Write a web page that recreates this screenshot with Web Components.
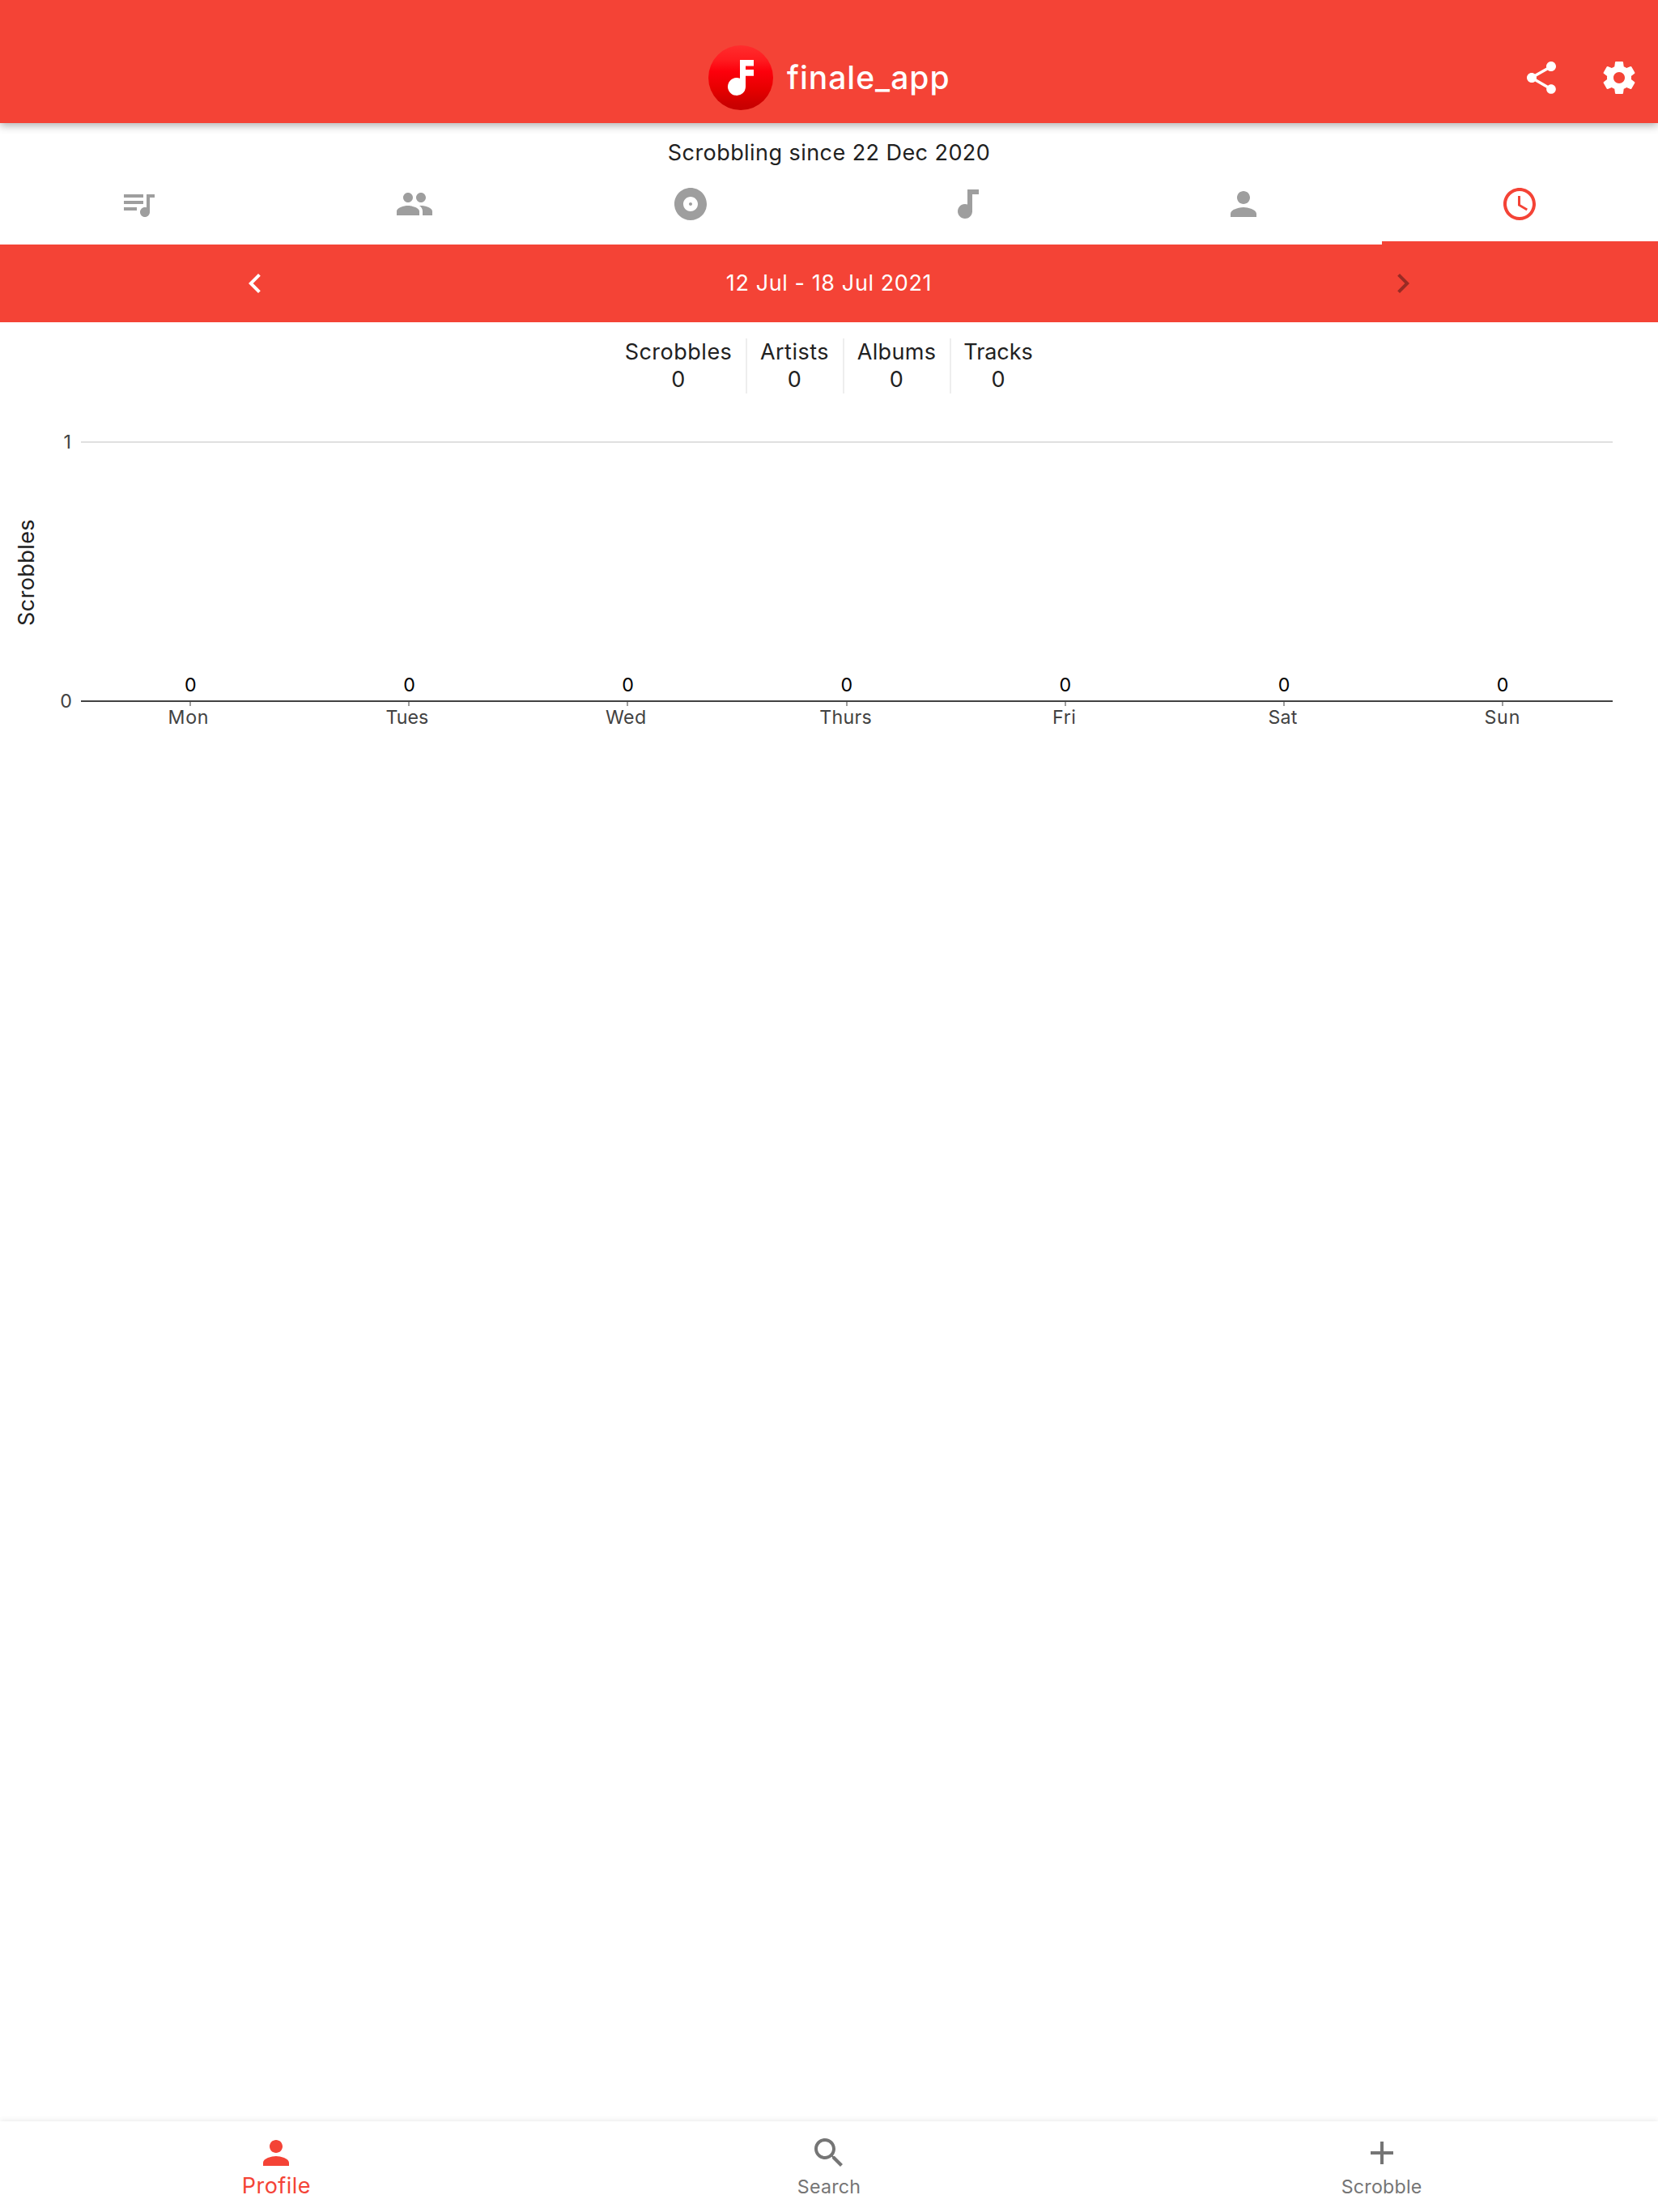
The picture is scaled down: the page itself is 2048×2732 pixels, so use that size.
<!DOCTYPE html>
<html lang="en">
<head>
<meta charset="utf-8">
<title>Finale</title>
<style>
html,body{margin:0;height:100%;background:#fff}
body{font-family:Inter,"Noto Sans",sans-serif;font-weight:400}
</style>
</head>
<body>
<finale-app></finale-app>
<script>
const ICONS = {
  share: 'M18 16.08c-.76 0-1.44.3-1.96.77L8.91 12.7c.05-.23.09-.46.09-.7s-.04-.47-.09-.7l7.05-4.11c.54.5 1.25.81 2.04.81 1.66 0 3-1.34 3-3s-1.34-3-3-3-3 1.34-3 3c0 .24.04.47.09.7L8.04 9.81C7.5 9.31 6.79 9 6 9c-1.66 0-3 1.34-3 3s1.34 3 3 3c.79 0 1.5-.31 2.04-.81l7.12 4.16c-.05.21-.08.43-.08.65 0 1.61 1.31 2.92 2.92 2.92s2.92-1.31 2.92-2.92-1.31-2.92-2.92-2.92z',
  settings: 'M19.43 12.98c.04-.32.07-.64.07-.98s-.03-.66-.07-.98l2.11-1.65c.19-.15.24-.42.12-.64l-2-3.46c-.12-.22-.39-.3-.61-.22l-2.49 1c-.52-.4-1.08-.73-1.69-.98l-.38-2.65C14.46 2.18 14.25 2 14 2h-4c-.25 0-.46.18-.49.42l-.38 2.65c-.61.25-1.17.59-1.69.98l-2.49-1c-.23-.09-.49 0-.61.22l-2 3.46c-.13.22-.07.49.12.64l2.11 1.65c-.04.32-.07.65-.07.98s.03.66.07.98l-2.11 1.65c-.19.15-.24.42-.12.64l2 3.46c.12.22.39.3.61.22l2.49-1c.52.4 1.08.73 1.69.98l.38 2.65c.03.24.24.42.49.42h4c.25 0 .46-.18.49-.42l.38-2.65c.61-.25 1.17-.59 1.69-.98l2.49 1c.23.09.49 0 .61-.22l2-3.46c.12-.22.07-.49-.12-.64l-2.11-1.65zM12 15.5c-1.93 0-3.5-1.57-3.5-3.5s1.57-3.5 3.5-3.5 3.5 1.57 3.5 3.5-1.57 3.5-3.5 3.5z',
  queue: 'M15 6H3v2h12V6zm0 4H3v2h12v-2zM3 16h8v-2H3v2zM17 6v8.18c-.31-.11-.65-.18-1-.18-1.66 0-3 1.34-3 3s1.34 3 3 3 3-1.34 3-3V8h3V6h-5z',
  people: 'M16 11c1.66 0 2.99-1.34 2.99-3S17.66 5 16 5c-1.66 0-3 1.34-3 3s1.34 3 3 3zm-8 0c1.66 0 2.99-1.34 2.99-3S9.66 5 8 5C6.34 5 5 6.34 5 8s1.34 3 3 3zm0 2c-2.33 0-7 1.17-7 3.5V19h14v-2.5c0-2.33-4.67-3.5-7-3.5zm8 0c-.29 0-.62.02-.97.05 1.16.84 1.97 1.97 1.97 3.45V19h6v-2.5c0-2.33-4.67-3.5-7-3.5z',
  album: 'M12 2C6.48 2 2 6.48 2 12s4.48 10 10 10 10-4.48 10-10S17.52 2 12 2zm0 14.5c-2.49 0-4.5-2.01-4.5-4.5S9.51 7.5 12 7.5s4.5 2.01 4.5 4.5-2.01 4.5-4.5 4.5zm0-5.5c-.55 0-1 .45-1 1s.45 1 1 1 1-.45 1-1-.45-1-1-1z',
  track: 'M12 3v9.28c-.47-.17-.97-.28-1.5-.28C8.01 12 6 14.01 6 16.5S8.01 21 10.5 21c2.31 0 4.2-1.75 4.45-4H15V6h4V3h-7z',
  person: 'M12 12c2.21 0 4-1.79 4-4s-1.79-4-4-4-4 1.79-4 4 1.79 4 4 4zm0 2c-2.67 0-8 1.34-8 4v2h16v-2c0-2.66-5.33-4-8-4z',
  clock: 'M11.99 2C6.47 2 2 6.48 2 12s4.47 10 9.99 10C17.52 22 22 17.52 22 12S17.52 2 11.99 2zM12 20c-4.42 0-8-3.58-8-8s3.58-8 8-8 8 3.58 8 8-3.58 8-8 8zM12.5 7H11v6l5.25 3.15.75-1.23-4.5-2.67z',
  prev: 'M15.41 7.41L14 6l-6 6 6 6 1.41-1.41L10.83 12z',
  next: 'M10 6L8.59 7.41 13.17 12l-4.58 4.59L10 18l6-6z',
  search: 'M15.5 14h-.79l-.28-.27C15.41 12.59 16 11.11 16 9.5 16 5.91 13.09 3 9.5 3S3 5.91 3 9.5 5.91 16 9.5 16c1.61 0 3.09-.59 4.23-1.57l.27.28v.79l5 4.99L20.49 19l-4.99-5zm-6 0C7.01 14 5 11.99 5 9.5S7.01 5 9.5 5 14 7.01 14 9.5 11.99 14 9.5 14z',
  add: 'M19 13h-6v6h-2v-6H5v-2h6V5h2v6h6v2z'
};
const define = (name, render) => customElements.define(name, class extends HTMLElement {
  connectedCallback() {
    this.attachShadow({ mode: 'open' }).innerHTML = render(this);
  }
});

define('md-icon', el => `
<style>:host{display:block;width:48px;height:48px;flex:none}svg{display:block;width:100%;height:100%;fill:currentColor}</style>
<svg viewBox="0 0 24 24"><path d="${ICONS[el.getAttribute('name')]}"/></svg>`);

define('user-avatar', () => `
<style>:host{display:block;width:80px;height:80px;flex:none}svg{display:block}</style>
<svg width="80" height="80" viewBox="0 0 80 80">
<defs><linearGradient id="g" x1="0" y1="0" x2="0" y2="1"><stop offset="0" stop-color="#ff2d2d"/><stop offset=".22" stop-color="#ff1c20"/><stop offset=".4" stop-color="#fd000c"/><stop offset=".68" stop-color="#e60000"/><stop offset=".9" stop-color="#cc0000"/><stop offset="1" stop-color="#c60000"/></linearGradient></defs>
<circle cx="40" cy="40" r="40" fill="url(#g)"/>
<path fill="#fff" d="M39 18h17v7.5H46V30h10v7.7H46V51a11 11 0 1 1-7-10.3z"/>
</svg>`);

define('app-header', () => `
<style>
:host{display:flex;box-sizing:border-box;height:152px;padding:40px 24px 0;background:#f44336;color:#fff;box-shadow:0 3px 10px rgba(0,0,0,.32);position:relative;z-index:1;align-items:center}
.side{flex:1;display:flex;justify-content:flex-end;gap:48px}
.title{display:flex;align-items:center;gap:17px;width:298px}
.name{font-size:39px;font-weight:500;line-height:48px;letter-spacing:1px}
</style>
<div class="side"></div>
<div class="title"><user-avatar></user-avatar><span class="name"><slot></slot></span></div>
<div class="side"><md-icon name="share"></md-icon><md-icon name="settings"></md-icon></div>`);

define('tab-item', el => `
<style>
:host{flex:1;display:flex;justify-content:center;height:92px;align-items:center;border-bottom:4px solid transparent;color:#9e9e9e}
:host([selected]){color:#f44336;border-color:#f44336}
</style><md-icon name="${el.getAttribute('icon')}"></md-icon>`);

define('profile-tabs', () => `<style>:host{display:flex}</style><slot></slot>`);

define('week-picker', () => `
<style>
:host{display:flex;justify-content:space-around;align-items:center;height:96px;background:#f44336;color:#fff}
.btn{width:96px;display:flex;justify-content:center}
.off{color:#982b24}
.range{font-size:27px;line-height:36px;letter-spacing:.6px}
</style>
<div class="btn"><md-icon name="prev"></md-icon></div>
<span class="range"><slot></slot></span>
<div class="btn off"><md-icon name="next"></md-icon></div>`);

define('stat-item', el => `
<style>
:host{display:flex;flex-direction:column;align-items:center;box-sizing:border-box;width:var(--w);height:68px;font-size:27px;line-height:34px;letter-spacing:var(--ls,.5px);border-left:2px solid #eee}
:host(:first-child){border-color:transparent}
</style><span>${el.getAttribute('label')}</span><span><slot></slot></span>`);

define('stat-row', () => `<style>:host{display:flex;justify-content:center;padding:20px 3px 0 0}</style><slot></slot>`);

define('week-chart', el => {
  const days = [['Mon', 232.9, .8], ['Tues', 502.8, 0], ['Wed', 773.2, .4], ['Thurs', 1044.6, .3], ['Fri', 1314.8, .6], ['Sat', 1584.5, .2], ['Sun', 1855.8, .8]];
  const step = 1892 / 7;
  return `
<style>
:host{display:block}svg{display:block;font-family:inherit;font-size:23.2px}
</style>
<svg width="2048" height="430" viewBox="0 486 2048 430">
<rect x="100" y="545" width="1892" height="2" fill="#e0e0e0"/>
${days.map((d, i) => { const x = 100 + step * (i + .5) - i * .15; return `
<rect x="${Math.round(x - 1)}" y="867" width="2" height="5" fill="#9e9e9e"/>
<text x="${x + .2}" y="854" text-anchor="middle" fill="#000">0</text>
<text x="${d[1]}" y="894" text-anchor="middle" fill="#424242" letter-spacing="${d[2]}">${d[0]}</text>`; }).join('')}
<rect x="100" y="865" width="1892" height="2" fill="#424242"/>
<text x="88" y="554" text-anchor="end" fill="#424242">1</text>
<text x="89" y="874" text-anchor="end" fill="#424242">0</text>
<text transform="translate(42 707) rotate(-90)" text-anchor="middle" fill="#212121" font-size="27" letter-spacing=".4">Scrobbles</text>
</svg>`;
});

define('nav-item', el => `
<style>
:host{flex:1;display:flex;flex-direction:column;align-items:center;box-sizing:border-box;padding-top:15px;color:#757575;font-size:23.2px;letter-spacing:.25px}
span{line-height:37px}
:host([selected]){color:#f44336;font-size:27px;letter-spacing:.45px}
:host([selected]) span{line-height:34px}
</style><md-icon name="${el.getAttribute('icon')}"></md-icon><span><slot></slot></span>`);

define('bottom-nav', () => `
<style>:host{display:flex;height:112px;background:#fff;box-shadow:0 -1px 7px rgba(0,0,0,.09)}</style><slot></slot>`);

define('finale-app', () => `
<style>
:host{display:flex;flex-direction:column;height:2732px;width:2048px;background:#fff;color:#212121;overflow:hidden}
.since{padding-top:20px;line-height:34px;font-size:27px;letter-spacing:.44px;text-align:center}
main{flex:1}
</style>
<app-header>finale_app</app-header>
<div class="since">Scrobbling since 22 Dec 2020</div>
<profile-tabs>
<tab-item icon="queue"></tab-item><tab-item icon="people"></tab-item><tab-item icon="album"></tab-item><tab-item icon="track"></tab-item><tab-item icon="person"></tab-item><tab-item icon="clock" selected></tab-item>
</profile-tabs>
<week-picker>12 Jul - 18 Jul 2021</week-picker>
<main>
<stat-row>
<stat-item label="Scrobbles" style="--w:167px">0</stat-item><stat-item label="Artists" style="--w:120px">0</stat-item><stat-item label="Albums" style="--w:132px;--ls:.35px">0</stat-item><stat-item label="Tracks" style="--w:119px;--ls:-.05px">0</stat-item>
</stat-row>
<week-chart></week-chart>
</main>
<bottom-nav>
<nav-item icon="person" selected>Profile</nav-item><nav-item icon="search">Search</nav-item><nav-item icon="add">Scrobble</nav-item>
</bottom-nav>`);
</script>
</body>
</html>
